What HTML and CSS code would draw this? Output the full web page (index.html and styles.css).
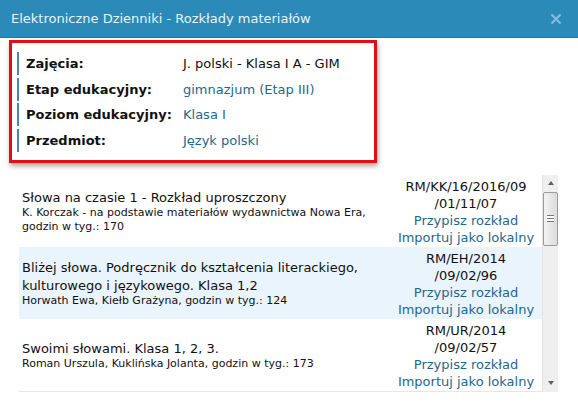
FILE: index.html
```
<!DOCTYPE html>
<html lang="pl">
<head>
<meta charset="utf-8">
<title>Rozkłady materiałów</title>
<link rel="stylesheet" href="styles.css">
</head>
<body>
<div class="dialog">
  <div class="titlebar">
    <span class="title">Elektroniczne Dzienniki - Rozkłady materiałów</span>
    <svg class="close" width="10" height="10" viewBox="0 0 10 10"><path d="M1.2 1.2 L8.8 8.8 M8.8 1.2 L1.2 8.8" stroke="#84bbd8" stroke-width="2.2" stroke-linecap="square"/></svg>
  </div>
  <div class="content">
    <div class="info">
      <div class="info-row"><span class="label">Zajęcia:</span><span class="value plain">J. polski - Klasa I A - GIM</span></div>
      <div class="info-row"><span class="label">Etap edukacyjny:</span><span class="value">gimnazjum (Etap III)</span></div>
      <div class="info-row"><span class="label">Poziom edukacyjny:</span><span class="value">Klasa I</span></div>
      <div class="info-row"><span class="label">Przedmiot:</span><span class="value">Język polski</span></div>
    </div>
    <div class="list">
      <div class="rows">
        <div class="row">
          <div class="desc">
            <div class="name">Słowa na czasie 1 - Rozkład uproszczony</div>
            <div class="meta">K. Korczak - na podstawie materiałów wydawnictwa Nowa Era, godzin w tyg.: 170</div>
          </div>
          <div class="actions">
            <div class="code">RM/KK/16/2016/09<br>/01/11/07</div>
            <a class="link">Przypisz rozkład</a>
            <a class="link">Importuj jako lokalny</a>
          </div>
        </div>
        <div class="row alt">
          <div class="desc">
            <div class="name">Bliżej słowa. Podręcznik do kształcenia literackiego, kulturowego i językowego. Klasa 1,2</div>
            <div class="meta">Horwath Ewa, Kiełb Grażyna, godzin w tyg.: 124</div>
          </div>
          <div class="actions">
            <div class="code">RM/EH/2014<br>/09/02/96</div>
            <a class="link">Przypisz rozkład</a>
            <a class="link">Importuj jako lokalny</a>
          </div>
        </div>
        <div class="row last">
          <div class="desc">
            <div class="name">Swoimi słowami. Klasa 1, 2, 3.</div>
            <div class="meta">Roman Urszula, Kuklińska Jolanta, godzin w tyg.: 173</div>
          </div>
          <div class="actions">
            <div class="code">RM/UR/2014<br>/09/02/57</div>
            <a class="link">Przypisz rozkład</a>
            <a class="link">Importuj jako lokalny</a>
          </div>
        </div>
      </div>
      <div class="scrollbar">
        <div class="arrow up"></div>
        <div class="thumb"><span class="grip"></span></div>
        <div class="track"></div>
        <div class="arrow down"></div>
      </div>
    </div>
  </div>
</div>
</body>
</html>
```
FILE: styles.css
```
* { box-sizing: border-box; }
html, body { margin: 0; padding: 0; background: #fff; }
body {
  font-family: "DejaVu Sans", Verdana, sans-serif;
  font-size: 13px;
  color: #111;
  width: 578px;
  height: 407px;
  overflow: hidden;
}
.titlebar {
  height: 38px;
  background: #2b8ab7;
  border-bottom: 1px solid #24789f;
  display: flex;
  align-items: center;
  justify-content: space-between;
  padding: 0 17px 0 11px;
}
.title {
  color: #e9f3f8;
  font-size: 13px;
}
.close { display: block; }
.content { padding-top: 2px; }
.info {
  margin-left: 9px;
  width: 368px;
  border: 3px solid #e01010;
  padding: 9px 5px 8px 5px;
  box-shadow: 1px 3px 5px rgba(0,0,0,0.35);
  display: flex;
  flex-direction: column;
  gap: 2.5px;
}
.info-row {
  height: 23px;
  display: flex;
  align-items: center;
  border-left: 2px solid #3f8ab4;
  padding-left: 7px;
}
.label {
  width: 157px;
  font-weight: bold;
  flex: none;
}
.value { color: #1f678c; }
.value.plain { color: #111; }
.list {
  margin: 12px 0 0 19px;
  display: flex;
  width: 539px;
}
.rows { width: 523px; }
.row {
  display: flex;
  padding: 3px 0 1px 0;
  min-height: 72px;
}
.row.alt { background: #eaf4fc; }
.row.last { border-bottom: 1px solid #e6e6e6; }
.desc {
  flex: 1;
  padding-left: 3px;
  align-self: center;
}
.name { line-height: 17.5px; }
.meta { font-size: 11px; line-height: 14px; }
.actions {
  width: 152px;
  flex: none;
  text-align: center;
  line-height: 17px;
}
.link { display: block; color: #1f678c; }
.scrollbar {
  width: 16px;
  background: #efefef;
  display: flex;
  flex-direction: column;
  height: 217px;
  border-left: 1px solid #e4e4e4;
}
.arrow {
  height: 17px;
  flex: none;
  display: flex;
  align-items: center;
  justify-content: center;
}
.arrow::before {
  content: "";
  border-left: 3.5px solid transparent;
  border-right: 3.5px solid transparent;
}
.arrow.up::before { border-bottom: 4px solid #606060; }
.arrow.down::before { border-top: 4px solid #606060; }
.thumb {
  height: 54px;
  flex: none;
  border: 1px solid #9b9b9b;
  border-radius: 2px;
  background: linear-gradient(to right, #f2f2f2, #dcdcdc);
  display: flex;
  align-items: center;
  justify-content: center;
}
.grip {
  width: 7px;
  height: 7px;
  border-top: 1px solid #777;
  border-bottom: 1px solid #777;
  background: linear-gradient(#fff 0 2px, #777 2px 3px, #fff 3px);
}
.track { flex: 1; }
```
